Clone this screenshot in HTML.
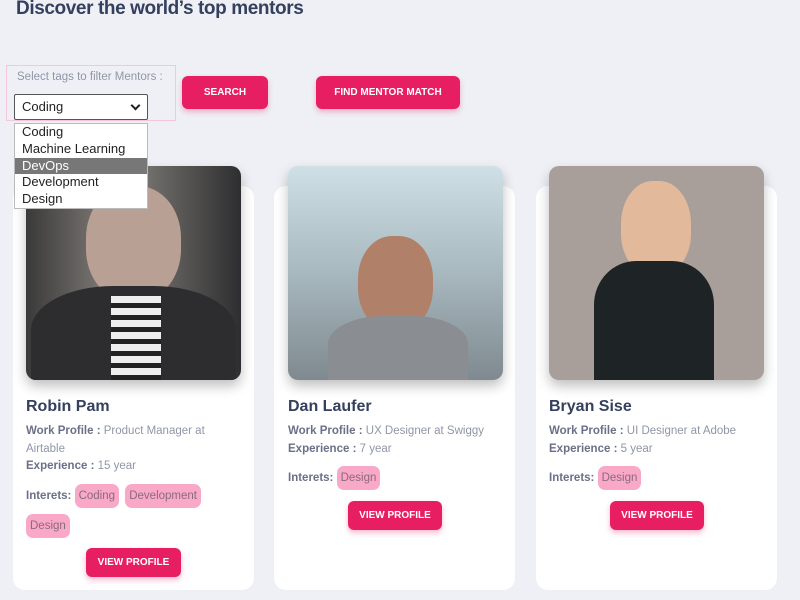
<!DOCTYPE html>
<html><head><meta charset="utf-8"><style>
*{box-sizing:border-box;margin:0;padding:0}
body{width:800px;height:600px;overflow:hidden;background:#eff0f5;font-family:"Liberation Sans",Arial,sans-serif;position:relative}
h1{position:absolute;left:16px;top:-2px;font-size:19px;color:#34405e;font-weight:bold;letter-spacing:-0.4px}
.filter{position:absolute;left:6px;top:65px;width:170px;height:56px;border:1px solid #f5c6dc}
.filter .lbl{position:absolute;left:10px;top:5px;font-size:11.5px;color:#9096a8}
.sel{position:absolute;left:14px;top:94px;width:134px;height:26px;border:1px solid #555;border-radius:2px;background:#fff;font-size:13px;color:#222;padding:4px 7px}
.sel:after{content:"";position:absolute;right:8px;top:7px;width:5px;height:5px;border-right:2px solid #222;border-bottom:2px solid #222;transform:rotate(45deg)}
.dd{position:absolute;left:14px;top:123px;width:134px;background:#fff;border:1px solid #bbb;font-size:13px;color:#222;z-index:5}
.dd div{height:16.8px;line-height:16.8px;padding-left:7px}
.dd .hl{background:#777;color:#fff}
.btn{position:absolute;background:#e81e63;color:#fff;font-size:10px;font-weight:bold;text-align:center;border-radius:6px;box-shadow:0 3px 6px rgba(232,30,99,.3)}
.card{position:absolute;top:186px;width:241px;height:404px;background:#fff;border-radius:12px}
.img{position:absolute;top:166px;width:215px;height:214px;border-radius:10px;box-shadow:0 6px 12px rgba(0,0,0,.25);overflow:hidden}
.name{position:absolute;font-size:16px;font-weight:bold;color:#34405e}
.info{position:absolute;font-size:11.5px;color:#9096a8;line-height:17.5px}
.info b{color:#6b7088}
.tag{display:inline-block;background:#f9a8c8;border-radius:7px;padding:4px 4px;line-height:16px;color:#8a6b7a;margin-right:3px}
</style></head><body>
<h1>Discover the world’s top mentors</h1>
<div class="filter"><div class="lbl">Select tags to filter Mentors :</div></div>
<div class="sel">Coding</div>
<div class="dd"><div>Coding</div><div>Machine Learning</div><div class="hl">DevOps</div><div>Development</div><div>Design</div></div>
<div class="btn" style="left:182px;top:76px;width:86px;height:33px;line-height:33px">SEARCH</div>
<div class="btn" style="left:316px;top:76px;width:144px;height:33px;line-height:33px">FIND MENTOR MATCH</div>

<div class="card" style="left:13px"></div>
<div class="card" style="left:274px"></div>
<div class="card" style="left:536px"></div>

<div class="img" style="left:26px;background:linear-gradient(90deg,#3a3a3a,#8a8580 45%,#6c6a66 60%,#2e2e30)">
<div style="position:absolute;left:60px;top:20px;width:95px;height:115px;border-radius:45%;background:#b9a094"></div>
<div style="position:absolute;left:5px;top:120px;width:205px;height:110px;border-radius:40% 40% 0 0;background:#2d2d2f"></div>
<div style="position:absolute;left:85px;top:130px;width:50px;height:90px;background:repeating-linear-gradient(180deg,#eee 0 7px,#222 7px 12px)"></div></div>
<div class="img" style="left:288px;background:linear-gradient(180deg,#cfe0e6,#a7b8be 50%,#7f8a90)">
<div style="position:absolute;left:70px;top:70px;width:75px;height:95px;border-radius:45%;background:#b08068"></div>
<div style="position:absolute;left:40px;top:150px;width:140px;height:70px;border-radius:40% 40% 0 0;background:#8a8e92"></div></div>
<div class="img" style="left:549px;background:#a89f9a">
<div style="position:absolute;left:72px;top:15px;width:70px;height:95px;border-radius:45%;background:#e3b99c"></div>
<div style="position:absolute;left:45px;top:95px;width:120px;height:125px;border-radius:35% 35% 0 0;background:#1e2426"></div></div>

<div class="name" style="left:26px;top:398px">Robin Pam</div>
<div class="info" style="left:26px;top:423px;width:200px"><b>Work Profile :</b> Product Manager at Airtable<br><b>Experience :</b> 15 year
<div style="margin-top:5px;line-height:30px"><b>Interets:</b> <span class="tag">Coding</span> <span class="tag">Development</span><br><span class="tag">Design</span></div></div>
<div class="btn" style="left:86px;top:548px;width:95px;height:29px;line-height:29px">VIEW PROFILE</div>

<div class="name" style="left:288px;top:398px">Dan Laufer</div>
<div class="info" style="left:288px;top:423px;width:215px"><b>Work Profile :</b> UX Designer at Swiggy<br><b>Experience :</b> 7 year
<div style="margin-top:5px;line-height:30px"><b>Interets:</b> <span class="tag">Design</span></div></div>
<div class="btn" style="left:348px;top:501px;width:94px;height:29px;line-height:29px">VIEW PROFILE</div>

<div class="name" style="left:549px;top:398px">Bryan Sise</div>
<div class="info" style="left:549px;top:423px;width:215px"><b>Work Profile :</b> UI Designer at Adobe<br><b>Experience :</b> 5 year
<div style="margin-top:5px;line-height:30px"><b>Interets:</b> <span class="tag">Design</span></div></div>
<div class="btn" style="left:610px;top:501px;width:94px;height:29px;line-height:29px">VIEW PROFILE</div>
</body></html>
